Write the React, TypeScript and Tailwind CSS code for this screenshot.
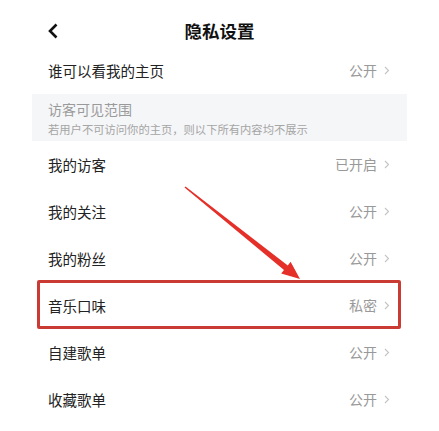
import React from 'react';

const rows = [
  { label: '我的访客', value: '已开启' },
  { label: '我的关注', value: '公开' },
  { label: '我的粉丝', value: '公开' },
  { label: '音乐口味', value: '私密', marked: true },
  { label: '自建歌单', value: '公开' },
  { label: '收藏歌单', value: '公开' },
];

const Chevron = () => (
  <svg width="6" height="9" viewBox="0 0 6 9" className="ml-[7px]">
    <path d="M1 1l3.5 3.5L1 8" fill="none" stroke="#c4c4c4" strokeWidth="1.1" />
  </svg>
);

const Row = ({ label, value, marked }: { label: string; value: string; marked?: boolean }) => (
  <div className="relative flex h-[47px] items-center justify-between pl-[48px] pr-[49px]">
    <span className="text-[14.5px] text-[#222]">{label}</span>
    <div className="flex items-center">
      <span className="text-[14px] text-[#999]">{value}</span>
      <Chevron />
    </div>
    {marked && (
      <div className="absolute left-[37px] right-[38px] top-[-2px] bottom-0 rounded-[2px] border-[3px] border-[#c93b33]" />
    )}
  </div>
);

export default function App() {
  return (
    <div
      className="relative h-[431px] w-[439px] overflow-hidden bg-white"
      style={{ fontFamily: '"Noto Sans CJK SC", "Noto Sans", sans-serif' }}
    >
      <div className="relative flex h-[47px] justify-center pt-[20px]">
        <svg width="12" height="16" viewBox="0 0 12 16" className="absolute left-[47px] top-[23px]">
          <path d="M9.5 1.5L3 8l6.5 6.5" fill="none" stroke="#111" strokeWidth="2.6" />
        </svg>
        <span className="text-[17.5px] font-bold leading-[22px] text-[#111]">隐私设置</span>
      </div>

      <Row label="谁可以看我的主页" value="公开" />

      <div className="mx-[32px] flex h-[47px] flex-col justify-center bg-[#f5f6f8] pl-[16px]">
        <span className="text-[14px] leading-[18px] text-[#9a9a9a]">访客可见范围</span>
        <span className="mt-[4px] text-[11.3px] leading-[14px] text-[#a5a5a5]">
          若用户不可访问你的主页，则以下所有内容均不展示
        </span>
      </div>

      {rows.map((r) => (
        <Row key={r.label} {...r} />
      ))}

      <svg className="pointer-events-none absolute inset-0" width="439" height="431" viewBox="0 0 439 431">
        <polygon
          points="185.5,186.4 287.8,265.4 290.6,261.8 300,279 281.2,273.6 284,270.1 184.5,187.6"
          fill="#e5302a"
        />
      </svg>
    </div>
  );
}
